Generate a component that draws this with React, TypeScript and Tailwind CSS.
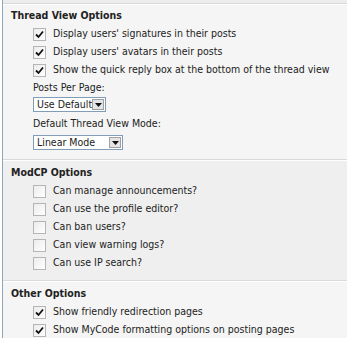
import React from 'react'

const font = { fontFamily: '"DejaVu Sans Condensed", "Liberation Sans", sans-serif' }

function Check({ checked }: { checked: boolean }) {
  return (
    <span className="flex h-[13px] w-[13px] shrink-0 items-center justify-center border border-[#b5b5b5] bg-gradient-to-br from-[#ececec] to-white">
      {checked && (
        <svg width="11" height="11" viewBox="0 0 11 11">
          <path d="M2 5.5 L4.5 8 L9 2.5" fill="none" stroke="#111" strokeWidth="1.8" />
        </svg>
      )}
    </span>
  )
}

function Option({ label, checked }: { label: string; checked: boolean }) {
  return (
    <div className="flex h-[18px] items-center gap-[7px] whitespace-nowrap pl-[30px]">
      <Check checked={checked} />
      <span>{label}</span>
    </div>
  )
}

function Select({ value, width }: { value: string; width: string }) {
  return (
    <div className={`flex h-[15px] items-center justify-between overflow-hidden whitespace-nowrap border border-[#7f9db9] bg-white pl-[3px] pr-[1px] ${width}`}>
      <span className="leading-none">{value}</span>
      <span className="flex h-[11px] w-[12px] shrink-0 items-center justify-center border border-[#a0a0a0] bg-[#e4e4e4]">
        <svg width="7" height="4" viewBox="0 0 7 4">
          <path d="M0 0 H7 L3.5 4 Z" fill="#111" />
        </svg>
      </span>
    </div>
  )
}

const threadOpts = [
  "Display users' signatures in their posts",
  "Display users' avatars in their posts",
  'Show the quick reply box at the bottom of the thread view',
]

const modOpts = [
  'Can manage announcements?',
  'Can use the profile editor?',
  'Can ban users?',
  'Can view warning logs?',
  'Can use IP search?',
]

const otherOpts = [
  'Show friendly redirection pages',
  'Show MyCode formatting options on posting pages',
]

export default function App() {
  return (
    <div className="h-[338px] w-[347px] overflow-hidden bg-white pl-[2px] text-[10.5px] text-[#222]" style={font}>
      <div className="h-full border-l border-[#8fa4bd]">
        {/* tail of previous section */}
        <div className="h-[4px] border-b border-[#d9d9d9] bg-[#ececec]" />

        {/* Thread View Options */}
        <div className="border-t border-white border-b border-b-[#d9d9d9] bg-[#f5f5f5] pb-[9px] pt-[1px]">
          <div className="flex h-[19px] items-center pl-[8px] font-bold">Thread View Options</div>
          {threadOpts.map((o) => (
            <Option key={o} label={o} checked />
          ))}
          <div className="flex h-[18px] items-center pl-[30px]">Posts Per Page:</div>
          <div className="pl-[30px]">
            <Select value="Use Default" width="w-[73px]" />
          </div>
          <div className="flex h-[21px] items-center pl-[30px] pt-[3px]">Default Thread View Mode:</div>
          <div className="pl-[30px] pt-[2px]">
            <Select value="Linear Mode" width="w-[90px]" />
          </div>
        </div>

        {/* ModCP Options */}
        <div className="border-t border-white border-b border-b-[#d9d9d9] bg-[#efefef] pb-[8px] pt-[2px]">
          <div className="flex h-[19px] items-center pl-[8px] font-bold">ModCP Options</div>
          {modOpts.map((o) => (
            <Option key={o} label={o} checked={false} />
          ))}
        </div>

        {/* Other Options */}
        <div className="border-t border-white bg-[#f5f5f5] pt-[2px]">
          <div className="flex h-[19px] items-center pl-[8px] font-bold">Other Options</div>
          {otherOpts.map((o) => (
            <Option key={o} label={o} checked />
          ))}
        </div>
      </div>
    </div>
  )
}
